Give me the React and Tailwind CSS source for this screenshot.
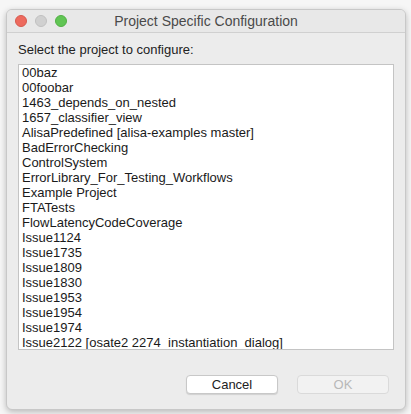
const projects = [
  "00baz",
  "00foobar",
  "1463_depends_on_nested",
  "1657_classifier_view",
  "AlisaPredefined [alisa-examples master]",
  "BadErrorChecking",
  "ControlSystem",
  "ErrorLibrary_For_Testing_Workflows",
  "Example Project",
  "FTATests",
  "FlowLatencyCodeCoverage",
  "Issue1124",
  "Issue1735",
  "Issue1809",
  "Issue1830",
  "Issue1953",
  "Issue1954",
  "Issue1974",
  "Issue2122 [osate2 2274_instantiation_dialog]",
];

export default function App() {
  return (
    <div
      className="w-[411px] h-[414px] bg-[#f6f6f6] pt-[9px] pl-[6px]"
      style={{ fontFamily: '"Liberation Sans", Arial, sans-serif' }}
    >
      <div className="w-[400px] h-[401px] rounded-[6px] bg-[#ececec] border border-[#c8c8c8] shadow-[0_2px_6px_rgba(0,0,0,0.25)] flex flex-col overflow-hidden">
        <div className="relative h-[23px] flex items-center justify-center border-b border-[#d0d0d0] bg-[#e8e8e8]">
          <div className="absolute left-[8px] top-[5px] flex gap-[8px]">
            <span className="w-[12px] h-[12px] rounded-full bg-[#ed6a5e] border border-[#d65a4f]" />
            <span className="w-[12px] h-[12px] rounded-full bg-[#d0d0d0] border border-[#c0c0c0]" />
            <span className="w-[12px] h-[12px] rounded-full bg-[#61c554] border border-[#52b045]" />
          </div>
          <span className="text-[14px] text-[#4a4a4a]">Project Specific Configuration</span>
        </div>
        <div className="px-[11px] pt-[9px]">
          <p className="text-[13px] leading-[16px] text-[#222]">Select the project to configure:</p>
          <div className="mt-[6px] h-[286px] w-[376px] bg-white border border-[#c4c4c4] pl-[3px] overflow-hidden">
            {projects.map((p) => (
              <div key={p} className="text-[13px] leading-[15px] text-[#1a1a1a] whitespace-nowrap">
                {p}
              </div>
            ))}
          </div>
          <div className="flex justify-end gap-[19px] mt-[25px] pr-[5px]">
            <button className="w-[92px] h-[19px] rounded-[4px] bg-white border border-[#c8c8c8] shadow-[0_1px_1px_rgba(0,0,0,0.12)] text-[13px] leading-[17px] text-[#222]">
              Cancel
            </button>
            <button className="w-[92px] h-[19px] rounded-[4px] bg-[#f2f2f2] border border-[#dadada] text-[13px] leading-[17px] text-[#b8b8b8]">
              OK
            </button>
          </div>
        </div>
      </div>
    </div>
  );
}
